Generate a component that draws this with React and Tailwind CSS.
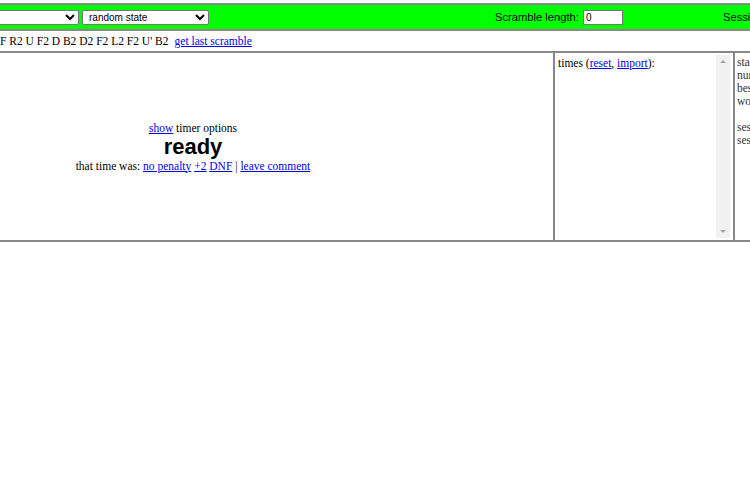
import React from "react";

const serif = { fontFamily: '"Liberation Serif", "Times New Roman", serif' };

const A = ({ children }) => (
  <a href="#" className="text-[#0000ee] underline">
    {children}
  </a>
);

const App = () => {
  return (
    <div className="w-[750px] h-[500px] overflow-hidden bg-white text-black">
      {/* top bar */}
      <div className="mt-[3px] h-[28px] w-[1000px] border-y-2 border-[#888] bg-[#00ff00] flex items-center font-['Liberation_Sans',Arial,sans-serif] text-[11.2px]">
        <select className="-ml-[21px] w-[100px] h-[15px] bg-white border border-[#767676] rounded-[2px] text-[10px] px-[2px]">
          <option></option>
        </select>
        <select className="ml-[3px] w-[127px] h-[15px] bg-white border border-[#767676] rounded-[2px] text-[10px] px-[2px]">
          <option>random state</option>
        </select>
        <span className="ml-[286px]">Scramble length:</span>
        <input
          defaultValue="0"
          className="ml-[4px] w-[40px] h-[15px] bg-white border border-[#767676] text-[10px] px-[2px]"
        />
        <span className="ml-[100px] whitespace-nowrap">Session: 1</span>
      </div>

      {/* scramble row */}
      <div
        className="h-[20px] pt-[1px] flex items-center whitespace-nowrap text-[11.5px]"
        style={serif}
      >
        <span>F R2 U F2 D B2 D2 F2 L2 F2 U' B2</span>
        <span className="ml-[6px]">
          <A>get last scramble</A>
        </span>
      </div>

      {/* main */}
      <div
        className="h-[191px] w-[1000px] border-y-2 border-[#888] flex text-[11.5px]"
        style={serif}
      >
        <div className="-ml-[167px] w-[722px] shrink-0 border-r-2 border-[#888] flex flex-col items-center justify-center">
          <div className="leading-[14px]">
            <A>show</A> timer options
          </div>
          <div className="font-['Liberation_Sans',Arial,sans-serif] font-bold text-[22px] leading-[24px]">
            ready
          </div>
          <div className="leading-[14px]">
            that time was: <A>no penalty</A> <A>+2</A> <A>DNF</A> |{" "}
            <A>leave comment</A>
          </div>
        </div>

        <div className="w-[180px] shrink-0 border-r-2 border-[#888] flex">
          <div className="flex-1 pl-[3px] pt-[3px] leading-[14px]">
            times (<A>reset</A>, <A>import</A>):
          </div>
          <div className="w-[14px] my-[2px] mr-[3px] bg-[#f1f1f1] flex flex-col justify-between items-center py-[5px]">
            <div className="w-0 h-0 border-x-[3px] border-x-transparent border-b-[3px] border-b-[#a3a3a3]" />
            <div className="w-0 h-0 border-x-[3px] border-x-transparent border-t-[3px] border-t-[#a3a3a3]" />
          </div>
        </div>

        <div className="w-[200px] shrink-0 pl-[2px] pt-[3px] leading-[13px] whitespace-nowrap text-[#333]">
          <div>stats:</div>
          <div>number of times: 0/0</div>
          <div>best time:</div>
          <div>worst time:</div>
          <div className="h-[13px]" />
          <div>session avg:</div>
          <div>session mean:</div>
        </div>
      </div>
    </div>
  );
};

export default App;
